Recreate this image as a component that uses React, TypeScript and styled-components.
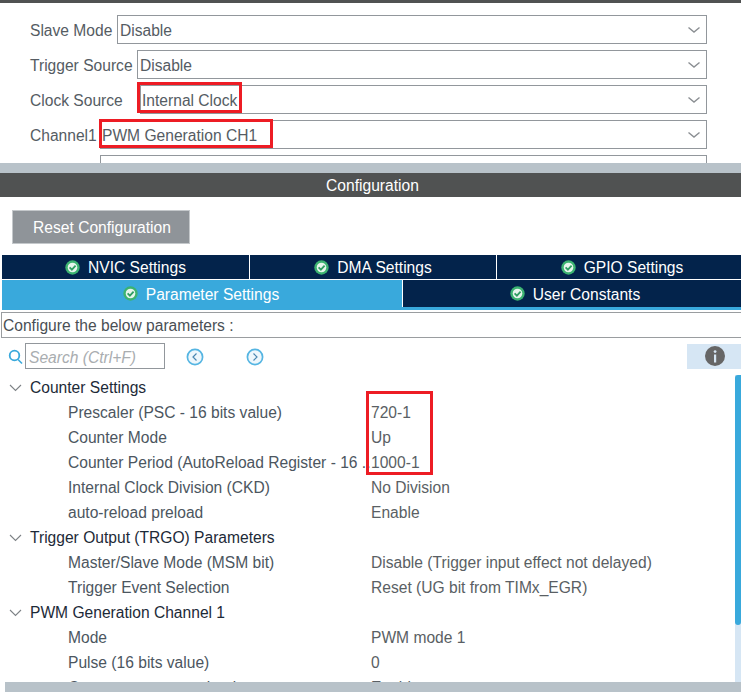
import React from "react";
import styled, { createGlobalStyle } from "styled-components";

const Global = createGlobalStyle`
  html, body { margin: 0; padding: 0; background: #fff; }
  body { font-family: "Liberation Sans", Arial, sans-serif; font-size: 15.6px; overflow: hidden; }
`;

const Page = styled.div`
  width: 741px;
  height: 692px;
  overflow: hidden;
  display: flex;
  flex-direction: column;
  background: #fff;
`;
const TopBar = styled.div`
  height: 3px;
  flex: none;
  background: #505252;
`;
const ModePanel = styled.div`
  height: 160px;
  flex: none;
  overflow: hidden;
  display: flex;
  flex-direction: column;
  gap: 6px;
  padding: 12px 34px 0 30px;
  box-sizing: border-box;
`;
const ModeRow = styled.div`
  display: flex;
  align-items: center;
  height: 29px;
  flex: none;
  color: #555c63;
`;
const ModeLabel = styled.div<{ $w: number }>`
  width: ${(p) => p.$w}px;
  flex: none;
  white-space: nowrap;
  padding-top: 2px;
  box-sizing: border-box;
`;
const Select = styled.div`
  position: relative;
  flex: 1;
  height: 29px;
  box-sizing: border-box;
  border: 1px solid #92979c;
  display: flex;
  align-items: center;
  justify-content: space-between;
  padding: 0 6px 0 2px;
`;
const SelectValue = styled.span<{ $tight?: boolean }>`
  padding-top: 2px;
  margin-left: ${(p) => (p.$tight ? "-1px" : "0")};
`;
const Highlight = styled.div<{ $l: number; $t: number; $w: number; $h: number }>`
  position: absolute;
  left: ${(p) => p.$l}px;
  top: ${(p) => p.$t}px;
  width: ${(p) => p.$w}px;
  height: ${(p) => p.$h}px;
  box-sizing: border-box;
  border: 3px solid #ed1c24;
  pointer-events: none;
`;
const Chevron = styled.svg`
  width: 12px;
  height: 8px;
  flex: none;
`;
const Strip = styled.div`
  height: 10px;
  flex: none;
  background: #b8c2c9;
`;
const TitleBar = styled.div`
  height: 24px;
  flex: none;
  box-sizing: border-box;
  background: #505252;
  color: #fff;
  display: flex;
  align-items: center;
  justify-content: center;
  padding: 2px 0 0 4px;
`;
const ButtonBar = styled.div`
  height: 58px;
  flex: none;
  box-sizing: border-box;
  padding: 13px 0 0 12px;
`;
const ResetButton = styled.button`
  width: 178px;
  height: 34px;
  box-sizing: border-box;
  border: 1px solid #c4c8cb;
  background: #8f9499;
  color: #fff;
  font: inherit;
  padding: 1px 0 0 2px;
`;
const Tabs = styled.div`
  flex: none;
  margin-left: 2px;
  display: flex;
  flex-direction: column;
  gap: 1px;
  border-bottom: 3px solid #39a9dc;
`;
const TabRow = styled.div<{ $cols: string; $h: number }>`
  display: grid;
  grid-template-columns: ${(p) => p.$cols};
  gap: 1px;
  height: ${(p) => p.$h}px;
`;
const Tab = styled.div<{ $active?: boolean; $shift?: number }>`
  background: ${(p) => (p.$active ? "#39a9dc" : "#03234b")};
  color: #fff;
  display: flex;
  align-items: center;
  justify-content: center;
  gap: 8px;
  padding-top: 2px;
  padding-left: ${(p) => Math.max(p.$shift ?? 0, 0)}px;
  padding-right: ${(p) => Math.max(-(p.$shift ?? 0), 0)}px;
  box-sizing: border-box;
`;
const TabCheck = styled.svg`
  width: 15px;
  height: 15px;
  flex: none;
  margin-top: -2px;
`;
const ConfigureBox = styled.div`
  flex: none;
  height: 26px;
  margin: 2px 0 0 1px;
  box-sizing: border-box;
  border: 1px solid #9a9da0;
  border-right: none;
  display: flex;
  align-items: center;
  padding: 2px 0 0 1px;
  color: #4a4f55;
`;
const SearchRow = styled.div`
  flex: none;
  height: 26px;
  margin-top: 5px;
  display: flex;
  align-items: center;
  padding-left: 8px;
`;
const SearchGlass = styled.svg`
  width: 15px;
  height: 16px;
  flex: none;
  margin-top: 1px;
`;
const SearchBox = styled.div`
  width: 140px;
  height: 26px;
  margin-left: 2px;
  box-sizing: border-box;
  border: 1px solid #92979c;
  color: #a9adb0;
  font-style: italic;
  display: flex;
  align-items: center;
  padding: 4px 0 0 3px;
`;
const NavIcon = styled.svg<{ $ml: number }>`
  width: 18px;
  height: 18px;
  margin: 1px 0 0 ${(p) => p.$ml}px;
  flex: none;
`;
const InfoBox = styled.div`
  margin-left: auto;
  width: 54px;
  height: 25px;
  background: #d6e6f4;
  display: flex;
  align-items: center;
  justify-content: center;
  padding-left: 2px;
  box-sizing: border-box;
`;
const TreeArea = styled.div`
  position: relative;
  flex: 1;
  min-height: 0;
  overflow: hidden;
  padding-top: 6px;
`;
const TreeRow = styled.div`
  display: grid;
  grid-template-columns: 371px 1fr;
  height: 25px;
  align-items: center;
  white-space: nowrap;
`;
const Header = styled.div`
  display: flex;
  align-items: center;
  color: #1d2a38;
  padding-left: 9px;
  gap: 8px;
`;
const Param = styled.div`
  padding-left: 68px;
  overflow: hidden;
  color: #4c5660;
`;
const Value = styled.div`
  color: #5a5f64;
`;
const ScrollTrack = styled.div`
  position: absolute;
  right: 0;
  top: 6px;
  bottom: 0;
  width: 6px;
  background: #d6e6f4;
`;
const ScrollThumb = styled.div`
  width: 6px;
  height: 250px;
  border-radius: 5px 0 5px 5px;
  background: #39a9dc;
`;
const BottomStrip = styled.div`
  height: 10px;
  flex: none;
  margin-left: 5px;
  background: #b8c2c9;
`;

const DownIcon = () => (
  <Chevron viewBox="0 0 12 8">
    <path d="M0.5 1.5 L6 6 L11.5 1.5" fill="none" stroke="#8b8f93" strokeWidth="1.4" />
  </Chevron>
);
const Check = () => (
  <TabCheck viewBox="0 0 15 15">
    <circle cx="7.5" cy="7.5" r="7.2" fill="#3cb371" />
    <circle cx="7.5" cy="7.5" r="4.8" fill="#e6f5ec" />
    <path d="M4.6 7.3 L6.9 9.6 L10.6 5.6" fill="none" stroke="#2f9e62" strokeWidth="1.8" />
  </TabCheck>
);
const TreeToggle = () => (
  <svg width="13" height="8" viewBox="0 0 13 8">
    <path d="M1 1 L6.5 6.5 L12 1" fill="none" stroke="#7d8286" strokeWidth="1.1" />
  </svg>
);

const modes = [
  { label: "Slave Mode", w: 87, value: "Disable" },
  { label: "Trigger Source", w: 107, value: "Disable" },
  { label: "Clock Source", w: 110, value: "Internal Clock", tight: true, mark: { l: -4, t: -4, w: 105, h: 31 } },
  { label: "Channel1", w: 70, value: "PWM Generation CH1", tight: true, mark: { l: -2, t: -2, w: 174, h: 29 } },
  { label: "", w: 70, value: "" },
];

type Row = { h?: string; p?: string; v?: string };
const rows: Row[] = [
  { h: "Counter Settings" },
  { p: "Prescaler (PSC - 16 bits value)", v: "720-1" },
  { p: "Counter Mode", v: "Up" },
  { p: "Counter Period (AutoReload Register - 16 ...", v: "1000-1" },
  { p: "Internal Clock Division (CKD)", v: "No Division" },
  { p: "auto-reload preload", v: "Enable" },
  { h: "Trigger Output (TRGO) Parameters" },
  { p: "Master/Slave Mode (MSM bit)", v: "Disable (Trigger input effect not delayed)" },
  { p: "Trigger Event Selection", v: "Reset (UG bit from TIMx_EGR)" },
  { h: "PWM Generation Channel 1" },
  { p: "Mode", v: "PWM mode 1" },
  { p: "Pulse (16 bits value)", v: "0" },
  { p: "Output compare preload", v: "Enable" },
];

export default function App() {
  return (
    <Page>
      <Global />
      <TopBar />
      <ModePanel>
        {modes.map((m, i) => (
          <ModeRow key={i}>
            <ModeLabel $w={m.w}>{m.label}</ModeLabel>
            <Select>
              <SelectValue $tight={m.tight}>{m.value}</SelectValue>
              {m.value && <DownIcon />}
              {m.mark && <Highlight $l={m.mark.l} $t={m.mark.t} $w={m.mark.w} $h={m.mark.h} />}
            </Select>
          </ModeRow>
        ))}
      </ModePanel>
      <Strip />
      <TitleBar>Configuration</TitleBar>
      <ButtonBar>
        <ResetButton>Reset Configuration</ResetButton>
      </ButtonBar>
      <Tabs>
        <TabRow $cols="247px 246px 1fr" $h={24}>
          <Tab><Check />NVIC Settings</Tab>
          <Tab><Check />DMA Settings</Tab>
          <Tab $shift={6}><Check />GPIO Settings</Tab>
        </TabRow>
        <TabRow $cols="400px 1fr" $h={27}>
          <Tab $active $shift={-2}><Check />Parameter Settings</Tab>
          <Tab $shift={6}><Check />User Constants</Tab>
        </TabRow>
      </Tabs>
      <ConfigureBox>Configure the below parameters :</ConfigureBox>
      <SearchRow>
        <SearchGlass viewBox="0 0 15 16">
          <circle cx="6.5" cy="6.5" r="4.8" fill="none" stroke="#39a9dc" strokeWidth="1.8" />
          <path d="M10 10.5 L14 14.5" stroke="#39a9dc" strokeWidth="1.6" />
        </SearchGlass>
        <SearchBox>Search (Ctrl+F)</SearchBox>
        <NavIcon $ml={21} viewBox="0 0 18 18">
          <circle cx="9" cy="9" r="7.6" fill="#eef7fc" stroke="#55b5e2" strokeWidth="1.7" />
          <path d="M10.5 5.5 L7 9 L10.5 12.5" fill="none" stroke="#4a86b0" strokeWidth="1.2" />
        </NavIcon>
        <NavIcon $ml={42} viewBox="0 0 18 18">
          <circle cx="9" cy="9" r="7.6" fill="#eef7fc" stroke="#55b5e2" strokeWidth="1.7" />
          <path d="M7.5 5.5 L11 9 L7.5 12.5" fill="none" stroke="#4a86b0" strokeWidth="1.2" />
        </NavIcon>
        <InfoBox>
          <svg width="20" height="20" viewBox="0 0 20 20">
            <circle cx="10" cy="10" r="10" fill="#666" />
            <rect x="9" y="8.5" width="2.2" height="8" fill="#d6e6f4" />
            <circle cx="10.1" cy="5.6" r="1.4" fill="#d6e6f4" />
          </svg>
        </InfoBox>
      </SearchRow>
      <TreeArea>
        {rows.map((r, i) => (
          <TreeRow key={i}>
            {r.h ? (
              <Header><TreeToggle />{r.h}</Header>
            ) : (
              <>
                <Param>{r.p}</Param>
                <Value>{r.v}</Value>
              </>
            )}
          </TreeRow>
        ))}
        <Highlight $l={366} $t={22} $w={67} $h={84} />
        <ScrollTrack><ScrollThumb /></ScrollTrack>
      </TreeArea>
      <BottomStrip />
    </Page>
  );
}
